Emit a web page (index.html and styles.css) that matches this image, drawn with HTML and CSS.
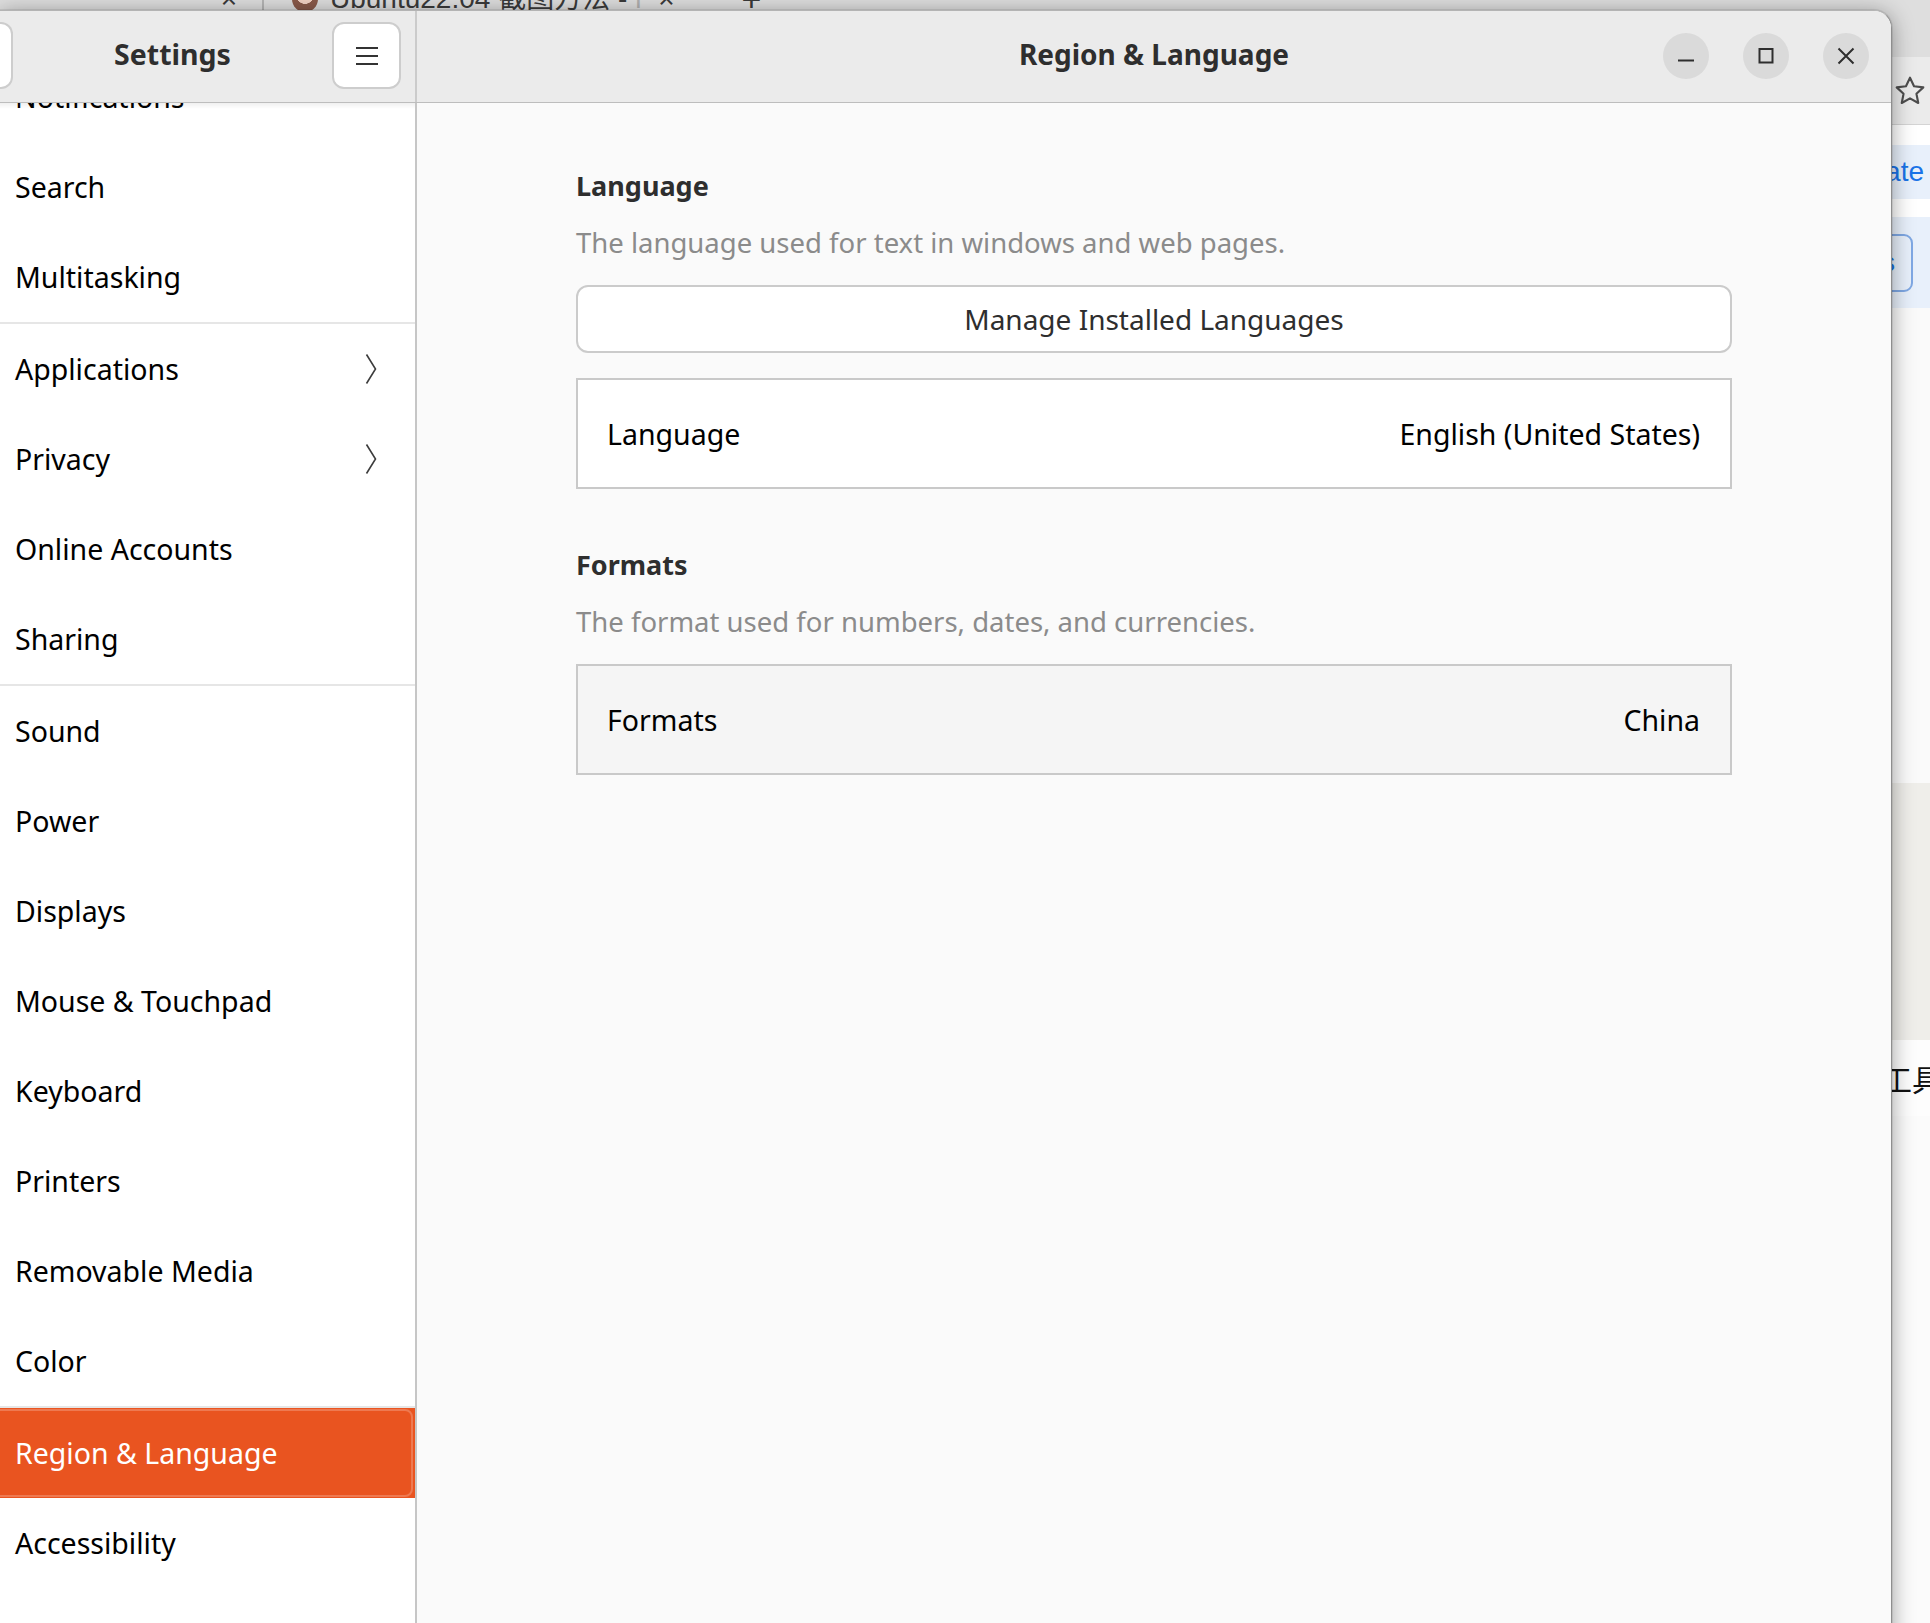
FILE: index.html
```html
<!DOCTYPE html>
<html lang="en">
<head>
<meta charset="utf-8">
<title>Settings - Region &amp; Language</title>
<link rel="stylesheet" href="styles.css">
</head>
<body>
<div class="browser">
  <div class="tabbar">
    <div class="tabs">
      <span class="tab-close prev">×</span>
      <span class="tab-divider"></span>
      <span class="favicon"></span>
      <span class="tab-title">Ubuntu22.04 截图方法 - </span>
      <span class="tab-fade">l</span>
      <span class="tab-close">×</span>
      <span class="tab-new">+</span>
    </div>
  </div>
  <div class="toolbar">
    <svg class="star" viewBox="0 0 24 24" width="34" height="34"><path d="M12 2.6l2.85 6.05 6.55.78-4.85 4.52 1.28 6.5L12 17.2l-5.83 3.25 1.28-6.5L2.6 9.430l6.55-.78z" fill="none" stroke="#4d4d4d" stroke-width="1.5" stroke-linejoin="round"/></svg>
  </div>
  <div class="page">
    <div class="page-gap g1"></div>
    <div class="band link-band"><span class="link">Translate</span></div>
    <div class="page-gap g2"></div>
    <div class="band btn-band"><span class="page-btn">Details</span></div>
    <div class="page-plain"></div>
    <div class="page-block"></div>
    <div class="page-text"><span>工具</span></div>
  </div>
</div>

<div class="window">
  <header class="headerbar">
    <div class="hb-side">
      <div class="back-stub"></div>
      <div class="hb-title">Settings</div>
      <div class="menu-btn">
        <svg width="22" height="18" viewBox="0 0 22 18"><path d="M0 1h22M0 9h22M0 17h22" stroke="#333" stroke-width="2"/></svg>
      </div>
    </div>
    <div class="hb-main">
      <div></div>
      <div class="hb-main-title">Region &amp; Language</div>
      <div class="controls">
        <div class="ctl"><svg width="18" height="18" viewBox="0 0 18 18"><path d="M1 13.5h16" stroke="#2e2e2e" stroke-width="2.2"/></svg></div>
        <div class="ctl"><svg width="18" height="18" viewBox="0 0 18 18"><rect x="2.5" y="2" width="13" height="13.5" fill="none" stroke="#2e2e2e" stroke-width="2"/></svg></div>
        <div class="ctl"><svg width="18" height="18" viewBox="0 0 18 18"><path d="M1.5 1.5l15 15M16.5 1.5l-15 15" stroke="#2e2e2e" stroke-width="2"/></svg></div>
      </div>
    </div>
  </header>

  <div class="win-body">
    <nav class="sidebar">
      <div class="sidebar-shade"></div>
      <div class="side-list">
        <div class="item">Notifications</div>
        <div class="item">Search</div>
        <div class="item">Multitasking</div>
        <div class="sep"></div>
        <div class="item">Applications<svg class="chev" width="12" height="32" viewBox="0 0 12 32"><path d="M1.5 1.5L10.5 16L1.5 30.5" fill="none" stroke="#3c3c3c" stroke-width="1.6"/></svg></div>
        <div class="item">Privacy<svg class="chev" width="12" height="32" viewBox="0 0 12 32"><path d="M1.5 1.5L10.5 16L1.5 30.5" fill="none" stroke="#3c3c3c" stroke-width="1.6"/></svg></div>
        <div class="item">Online Accounts</div>
        <div class="item">Sharing</div>
        <div class="sep"></div>
        <div class="item">Sound</div>
        <div class="item">Power</div>
        <div class="item">Displays</div>
        <div class="item">Mouse &amp; Touchpad</div>
        <div class="item">Keyboard</div>
        <div class="item">Printers</div>
        <div class="item">Removable Media</div>
        <div class="item">Color</div>
        <div class="sep"></div>
        <div class="item selected">Region &amp; Language</div>
        <div class="item">Accessibility</div>
        <div class="item">Users</div>
      </div>
    </nav>

    <main class="content">
      <div class="column">
        <section class="section">
          <h2 class="sec-title">Language</h2>
          <p class="sec-desc">The language used for text in windows and web pages.</p>
          <div class="wide-btn">Manage Installed Languages</div>
          <div class="pref-row"><span>Language</span><span>English (United States)</span></div>
        </section>
        <section class="section">
          <h2 class="sec-title">Formats</h2>
          <p class="sec-desc">The format used for numbers, dates, and currencies.</p>
          <div class="pref-row alt"><span>Formats</span><span>China</span></div>
        </section>
      </div>
    </main>
  </div>
</div>
</body>
</html>
```

FILE: styles.css
```css
* { box-sizing: border-box; }

html, body {
  margin: 0;
  padding: 0;
}

body {
  width: 1930px;
  height: 1623px;
  overflow: hidden;
  position: relative;
  background: #ffffff;
  font-family: "Noto Sans", "Open Sans", sans-serif;
}

/* ---------- browser behind the window ---------- */
.browser {
  display: flex;
  flex-direction: column;
  height: 1623px;
}

.tabbar {
  height: 57px;
  background: #dedede;
  display: flex;
  align-items: flex-start;
  font-family: "Liberation Sans", "Noto Sans CJK SC", sans-serif;
  font-size: 28px;
  color: #3a3a3a;
  overflow: hidden;
}

.tabs {
  display: flex;
  align-items: flex-end;
  margin-top: -17px;
  padding-left: 218px;
  line-height: 32px;
}

.tab-close { width: 22px; text-align: center; }
.tab-close.prev { margin-right: 22px; }
.tab-divider {
  width: 2px;
  height: 30px;
  background: #b5b5b5;
  margin-right: 28px;
}
.favicon {
  width: 26px;
  height: 26px;
  border-radius: 50%;
  background: radial-gradient(circle at 50% 35%, #f4d2c4 0 40%, #8a5a4a 42% 100%);
  margin-right: 12px;
  align-self: center;
}
.tab-title { margin-right: 8px; }
.tab-fade { color: #b0b0b0; margin-right: 14px; }
.tab-new { margin-left: 64px; font-size: 34px; }

.toolbar {
  height: 68px;
  background: #ebebeb;
  border-bottom: 1px solid #d4d4d4;
  display: flex;
  align-items: center;
  justify-content: flex-end;
  padding-right: 3px;
}

.page {
  flex: 1;
  display: flex;
  flex-direction: column;
  background: #fbfbfb;
}
.page-gap { background: #ffffff; }
.g1 { height: 20px; }
.g2 { height: 18px; }
.band {
  background: #e8f0fb;
  display: flex;
  align-items: center;
  justify-content: flex-end;
}
.link-band {
  height: 54px;
  padding-right: 6px;
}
.link {
  font-family: "Liberation Sans", sans-serif;
  font-size: 28px;
  color: #1a73e8;
}
.btn-band {
  height: 91px;
  padding-right: 17px;
}
.page-btn {
  height: 58px;
  display: flex;
  align-items: center;
  padding: 0 16px 0 20px;
  border: 2px solid #7fa8e4;
  border-radius: 9px;
  font-family: "Liberation Sans", sans-serif;
  font-size: 26px;
  color: #1a73e8;
}
.page-plain { height: 475px; background: #fafafa; }
.page-block { height: 257px; background: #efeeea; }
.page-text {
  height: 76px;
  display: flex;
  align-items: center;
  justify-content: flex-end;
  font-family: "Noto Sans CJK SC", sans-serif;
  font-size: 30px;
  color: #111;
  background: #fdfdfd;
}
.page-text span { margin-right: -12px; }

/* ---------- settings window ---------- */
.window {
  position: absolute;
  left: 0;
  top: 10px;
  width: 1892px;
  height: 1640px;
  background: #fafafa;
  border-top: 1px solid #b4b4b4;
  border-right: 1px solid #8e8e8e;
  border-top-right-radius: 18px;
  overflow: hidden;
  box-shadow: 0 0 0 1px rgba(0, 0, 0, 0.08), 0 3px 22px rgba(0, 0, 0, 0.38);
  display: flex;
  flex-direction: column;
}

.headerbar {
  height: 92px;
  flex: none;
  display: flex;
  background: #ebebeb;
  border-bottom: 1px solid #bdbdbd;
}

.hb-side {
  width: 417px;
  flex: none;
  display: flex;
  align-items: center;
  padding: 0 14px 2px 0;
  border-right: 2px solid #cbcbcb;
}

.back-stub {
  width: 13px;
  height: 67px;
  background: #ffffff;
  border: 2px solid #cdcdcd;
  border-left: none;
  border-radius: 0 12px 12px 0;
}

.hb-title {
  flex: 1;
  text-align: center;
  font-weight: 700;
  font-size: 28.5px;
  color: #2e2e2e;
  margin-bottom: 3px;
}

.menu-btn {
  width: 69px;
  height: 67px;
  background: #ffffff;
  border: 2px solid #cdcdcd;
  border-radius: 12px;
  display: flex;
  align-items: center;
  justify-content: center;
}

.hb-main {
  flex: 1;
  display: grid;
  grid-template-columns: 1fr auto 1fr;
  align-items: center;
  padding-bottom: 2px;
}

.hb-main-title {
  font-weight: 700;
  font-size: 28px;
  color: #2e2e2e;
  margin-bottom: 3px;
}

.controls {
  justify-self: end;
  display: flex;
  gap: 34px;
  padding-right: 22px;
}

.ctl {
  width: 46px;
  height: 46px;
  border-radius: 50%;
  background: #dadada;
  display: flex;
  align-items: center;
  justify-content: center;
}

.win-body {
  flex: 1;
  display: flex;
  min-height: 0;
}

/* ---------- sidebar ---------- */
.sidebar {
  width: 417px;
  flex: none;
  background: #ffffff;
  border-right: 2px solid #c6c6c6;
  overflow: hidden;
  position: relative;
}

.sidebar-shade {
  position: absolute;
  left: 0;
  right: 0;
  top: 0;
  height: 6px;
  background: linear-gradient(rgba(0, 0, 0, 0.06), rgba(0, 0, 0, 0));
  z-index: 1;
}

.side-list {
  margin-top: -51px;
}

.item {
  height: 90px;
  display: flex;
  align-items: center;
  justify-content: space-between;
  padding: 0 38px 0 15px;
  font-size: 28.5px;
  color: #000000;
  position: relative;
}

.chev { flex: none; }

.sep {
  height: 2px;
  background: #e6e6e6;
}

.item.selected {
  background: #e95420;
  color: #ffffff;
}

.item.selected::after {
  content: "";
  position: absolute;
  left: -12px;
  right: 2px;
  top: 1px;
  bottom: 1px;
  border: 2px solid rgba(255, 255, 255, 0.22);
  border-radius: 8px;
}

/* ---------- content ---------- */
.content {
  flex: 1;
  background: #fafafa;
  padding-top: 65px;
}

.column {
  width: 1156px;
  margin: 0 auto;
}

.section + .section {
  margin-top: 58px;
}

.sec-title {
  margin: 0 0 19px;
  font-size: 27px;
  font-weight: 700;
  line-height: 1.362;
  color: #2e2e2e;
}

.sec-desc {
  margin: 0 0 24px;
  font-size: 27.5px;
  line-height: 1.362;
  color: #8b8b8b;
}

.wide-btn {
  height: 68px;
  display: flex;
  align-items: center;
  justify-content: center;
  background: #ffffff;
  border: 2px solid #cbcbcb;
  border-radius: 12px;
  font-size: 28px;
  color: #2e2e2e;
  margin-bottom: 25px;
}

.pref-row {
  height: 111px;
  display: flex;
  align-items: center;
  justify-content: space-between;
  padding: 0 30px 0 29px;
  background: #ffffff;
  border: 2px solid #c9c9c9;
  font-size: 28.5px;
  color: #000000;
}

.pref-row.alt {
  background: #f5f5f5;
}
```
